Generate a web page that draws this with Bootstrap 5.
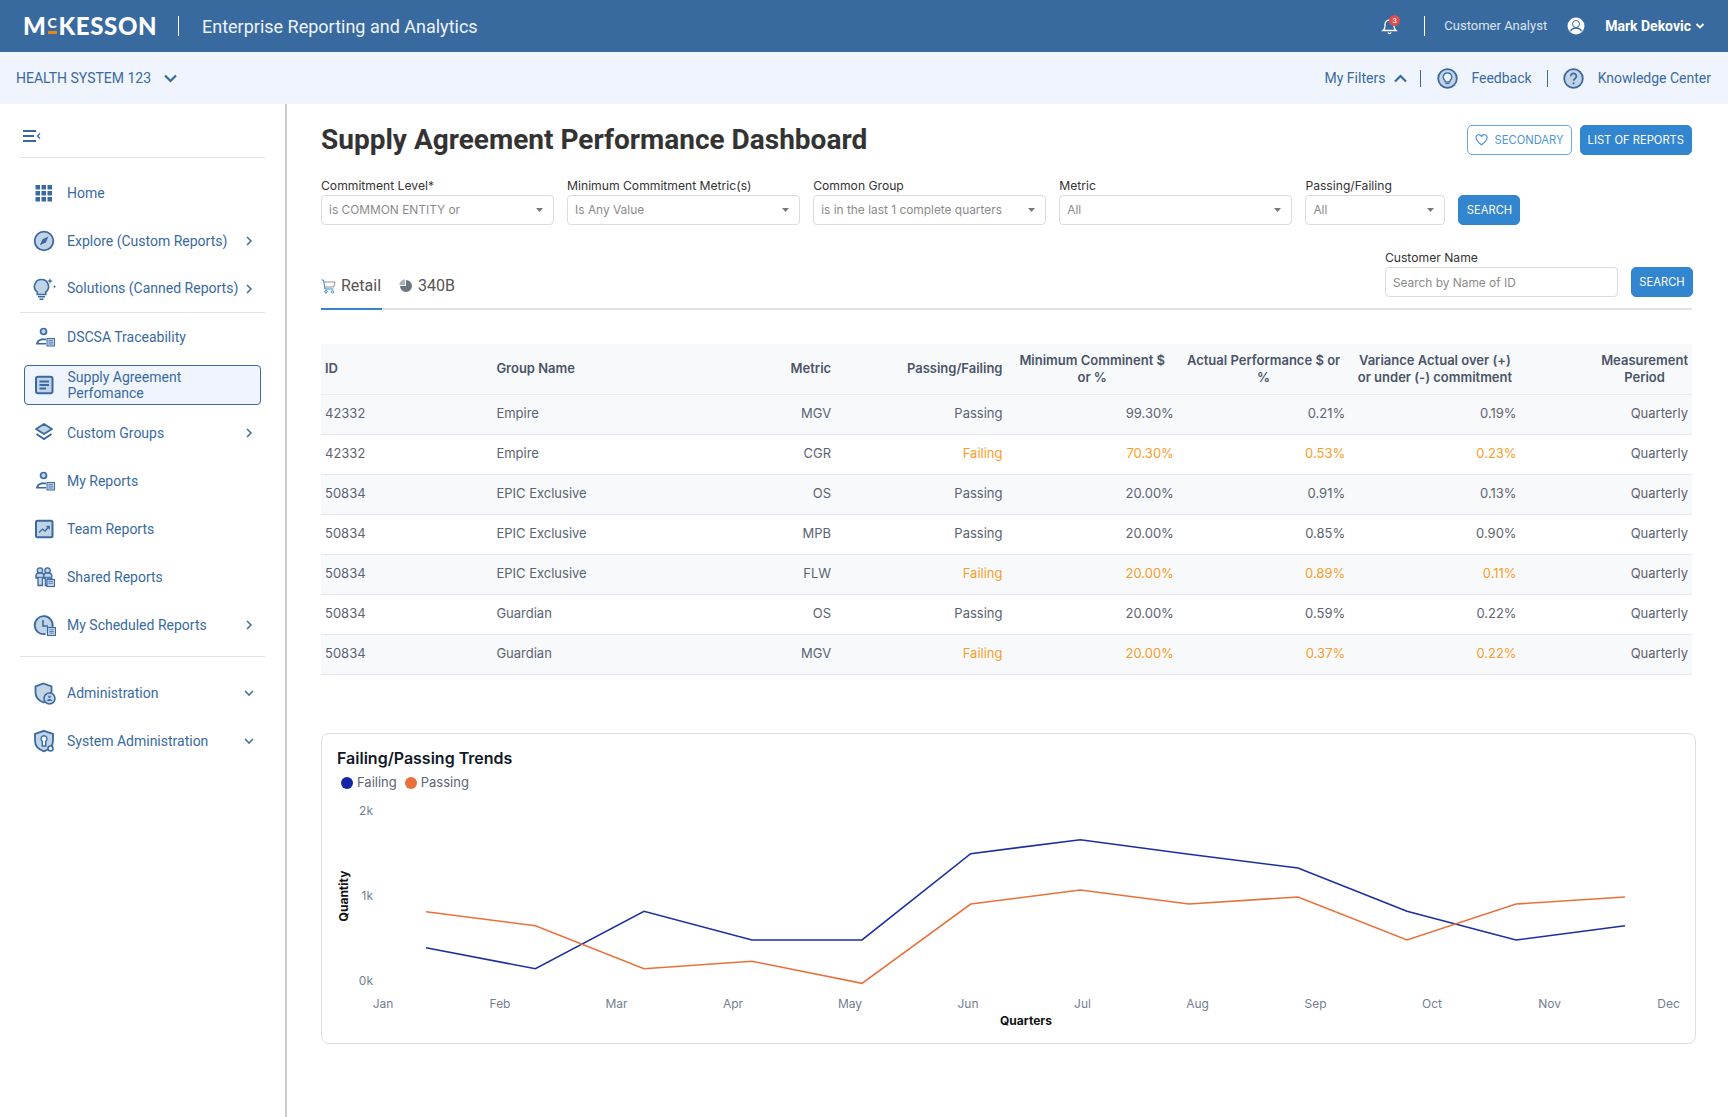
<!DOCTYPE html>
<html lang="en">
<head>
<meta charset="utf-8">
<title>Supply Agreement Performance Dashboard</title>
<link href="https://cdn.jsdelivr.net/npm/bootstrap@5.3.0/dist/css/bootstrap.min.css" rel="stylesheet">
<style>
:root{--mk-blue:#396a9f;--mk-soft:#c3d3e6;--mk-btn:#3285cf;}
body{font-family:"Roboto","Liberation Sans",sans-serif;background:#fff;color:#333;min-height:1117px;overflow:hidden}
.top-bar{height:52px;background:var(--mk-blue);color:#fff;padding:0 23px}
.brand{font-family:"Lato","Liberation Sans",sans-serif;font-weight:900;font-size:24px;line-height:1;letter-spacing:.65px;color:#fff;width:131px;white-space:nowrap}
.brand-c{position:relative;display:inline-block;font-size:14px;vertical-align:7px;margin:0 1px;line-height:1}
.brand-c::after{content:"";position:absolute;left:0;right:0;top:15px;height:3px;background:#e8841a}
.v-rule{width:1px;background:#fff;height:20px}
.app-title{font-size:18px;color:#eef3f9;margin-left:23px}
.role{font-size:13px;color:#d9e4f0}
.user-name{font-size:14px;font-weight:700}
.sub-bar{height:52px;background:#f0f5fd;color:var(--mk-blue);font-size:14px;padding:0 17px 0 16px}
.v-rule-b{width:1px;height:17px;background:var(--mk-blue)}
.shell{display:flex;min-height:1013px}
.side{width:287px;flex:none;border-right:2px solid #ccc;padding:0 20px;color:var(--mk-blue);font-size:14px}
.side-top{height:54px;display:flex;align-items:center;padding-left:3px;padding-top:10px;border-bottom:1px solid #e2e2e2}
.side-list{padding-top:11px}
.side-item{height:48px;display:flex;align-items:center;padding-left:11.5px;color:var(--mk-blue);text-decoration:none}
.side-item .ico{width:24px;height:24px;flex:none;margin-right:11.500px}
.side-item .arr{margin-left:auto;margin-right:13px;flex:none}
.side-item .arr-dn{margin-right:11px}
.side-cur{height:40px;margin:4px;padding-left:7px;background:#f0f5fd;border:1px solid var(--mk-blue);border-radius:4px;line-height:16px}
.side-sep{border-bottom:1px solid #e2e2e2}
.side-gap{height:8px;margin-bottom:12px}
.main{flex:1;min-width:0;padding:21px 36px 0 34px}
.page-title{font-size:28px;font-weight:700;color:#333;margin:0;line-height:30px}
.mk-btn{height:30px;padding:0 7px;font-family:"Inter","Liberation Sans",sans-serif;font-size:11.200px;line-height:28px;border-radius:5px;border:1px solid var(--mk-btn);background:var(--mk-btn);color:#fff;white-space:nowrap}
.mk-btn:hover{background:var(--mk-btn);color:#fff;border-color:var(--mk-btn)}
.mk-btn-line{background:#fff;color:#4f95d8;border:1.5px solid #6aa7de;gap:7px}
.btn-pair{gap:8px}
.filters{display:grid;grid-template-columns:repeat(4,232.6px) 139.6px 62px;column-gap:13.5px;margin-top:21px;align-items:end}
.fld-label{display:block;font-family:"Inter","Liberation Sans",sans-serif;font-size:12.150px;line-height:19px;color:#333;margin:0;white-space:nowrap}
.fld{height:30px;font-family:"Inter","Liberation Sans",sans-serif;font-size:11.900px;color:#8b8b8b;border:1px solid #dcdcdc;border-radius:4px;padding:0 20px 0 7px;line-height:28px}
select.fld{background-image:url("data:image/svg+xml,%3Csvg xmlns='http://www.w3.org/2000/svg' width='7' height='4'%3E%3Cpath d='M0 0h7L3.5 4z' fill='%23777'/%3E%3C/svg%3E");background-size:7px 4px;background-position:right 10px center}
input.fld::placeholder{color:#8b8b8b;opacity:1}
.tab-row{margin-top:23px;border-bottom:2px solid #dfe3e8;height:62px}
.tab-list{gap:17px;margin-bottom:-2px}
.tab-lnk{display:flex;align-items:center;gap:5px;font-size:16px;line-height:24px;color:#555;padding:0 1px 10px 0;border-bottom:2px solid transparent;text-decoration:none}
.tab-on{border-bottom-color:var(--mk-btn)}
.cust{display:grid;grid-template-columns:232.6px 62px;column-gap:13.5px;padding-bottom:11px;margin-right:-1px;align-items:end}
.cust-label{grid-column:1 / 3}
.data-tbl{--bs-table-striped-bg:#f8f9fb;--bs-table-striped-color:#5b6472;--bs-table-border-color:#e3e7ef;--bs-table-color:#5b6472;table-layout:fixed;margin:34px 0 0;font-family:"Inter","Liberation Sans",sans-serif;font-size:13px;color:#5b6472}
.data-tbl th{height:50px;padding:0 4px;background:#f8f9fb;font-weight:600;color:#4a5568;vertical-align:middle;line-height:17px;text-align:right;border-bottom-color:#e8ebf1}
.data-tbl td{height:40px;padding:0 4px;vertical-align:middle;text-align:right;white-space:nowrap}
.data-tbl .al-l{text-align:left}
.data-tbl .al-c{text-align:center}
.data-tbl td.bad{color:#fb9d27!important}
.stack-hd{display:inline-block;text-align:center}
.chart-box{margin-top:58px;margin-right:-4px;height:311px;border:1px solid #dedede;border-radius:8px;--bs-card-bg:#fff}
.chart-title{font-family:"Inter","Liberation Sans",sans-serif;font-size:16px;font-weight:600;line-height:20px;color:#111827;margin:14px 0 0 15px}
.legend-row{margin:5px 0 0 19px;height:20px;font-family:"Inter","Liberation Sans",sans-serif;font-size:13px;color:#5b6472}
.dot{width:12px;height:12px;border-radius:50%;display:inline-block;margin-right:4px}
.dot-f{background:#1226a6}
.dot-p{background:#e9703a;margin-left:8px}
.chart-svg{display:block;margin-top:3px}
.chart-svg text{font-family:"Inter","Liberation Sans",sans-serif;font-size:12px;fill:#737e91}
.chart-svg .ax{font-weight:700;fill:#111}
.bell-wrap{width:18px;height:18px}
.bell-num{left:8px;top:-2px;width:11px;height:11px;background:#dc4d4d;font-size:8px;line-height:1}
.gap-a{margin-left:25px;margin-right:19px}
.gap-b{margin-left:20px}
.gap-c{margin-left:13px}
.gap-d{margin-left:9px}
.gap-e{margin-left:13px;margin-right:16px}
.gap-f{margin-left:13px}
.gap-g{margin-left:15px;margin-right:15px}
.gap-h{margin-left:14px}
</style>
</head>
<body>
<header class="top-bar d-flex align-items-center">
  <div class="brand">M<span class="brand-c">C</span>KESSON</div>
  <span class="v-rule ms-4"></span>
  <span class="app-title">Enterprise Reporting and Analytics</span>
  <div class="ms-auto d-flex align-items-center">
    <span class="bell-wrap position-relative d-inline-flex">
      <svg width="18" height="18" viewBox="0 0 18 18" fill="none" stroke="#fff" stroke-width="1.3"><path d="M2 13.5c1.4-1 2-2.2 2-4.5V7.5a4.5 4.5 0 0 1 9 0V9c0 2.3.6 3.500 2 4.500z"/><path d="M7 15.500a1.800 1.800 0 0 0 3.200 0"/></svg>
      <span class="bell-num position-absolute rounded-circle d-flex align-items-center justify-content-center text-white">3</span>
    </span>
    <span class="v-rule gap-a"></span>
    <span class="role">Customer Analyst</span>
    <svg class="gap-b" width="18" height="18" viewBox="0 0 18 18"><circle cx="9" cy="9" r="8.500" fill="#fff"/><circle cx="9" cy="7" r="3.500" fill="#fff" stroke="#396a9f" stroke-width="1"/><path d="M3.500 14.200c1.200-2.400 3-3.200 5.500-3.200s4.300.8 5.500 3.200" fill="none" stroke="#396a9f" stroke-width="1.300"/></svg>
    <span class="user-name gap-b">Mark Dekovic</span>
    <svg class="ms-1" width="10" height="8" viewBox="0 0 10 8" fill="none" stroke="#fff" stroke-width="1.800"><path d="M1.500 2l3.500 3.500L8.500 2"/></svg>
  </div>
</header>
<div class="sub-bar d-flex align-items-center">
  <span>HEALTH SYSTEM 123</span>
  <svg class="gap-c" width="13" height="9" viewBox="0 0 13 9" fill="none" stroke="#396a9f" stroke-width="2.200"><path d="M1 1.500l5.500 5.500L12 1.500"/></svg>
  <div class="ms-auto d-flex align-items-center">
    <span>My Filters</span>
    <svg class="gap-d" width="13" height="9" viewBox="0 0 13 9" fill="none" stroke="#396a9f" stroke-width="2.200"><path d="M1 7.500L6.500 2 12 7.500"/></svg>
    <span class="v-rule-b gap-e"></span>
    <svg width="21" height="21" viewBox="0 0 21 21"><circle cx="10.500" cy="10.500" r="9.300" fill="#c3d3e6" stroke="#396a9f" stroke-width="1.800"/><path d="M10.500 4.800a4.200 4.200 0 0 0-2.400 7.700v1.300h4.800v-1.300a4.200 4.200 0 0 0-2.400-7.700z" fill="#f0f5fd" stroke="#396a9f" stroke-width="1.200"/><path d="M8.500 15.500h4" stroke="#396a9f" stroke-width="1.200"/></svg>
    <span class="gap-f">Feedback</span>
    <span class="v-rule-b gap-g"></span>
    <svg width="21" height="21" viewBox="0 0 21 21"><circle cx="10.500" cy="10.500" r="9.300" fill="#c3d3e6" stroke="#396a9f" stroke-width="1.800"/><path d="M7.800 8.200a2.800 2.800 0 1 1 4.300 2.300c-1 .7-1.500 1.200-1.500 2.300" fill="none" stroke="#396a9f" stroke-width="1.700"/><circle cx="10.600" cy="15.300" r="1.100" fill="#396a9f"/></svg>
    <span class="gap-h">Knowledge Center</span>
  </div>
</div>
<div class="shell">
  <aside class="side">
    <div class="side-top">
      <svg width="18" height="12" viewBox="0 0 18 12" fill="none" stroke="#396a9f"><path d="M0 1h13M0 6h11M0 11h13" stroke-width="1.800"/><path d="M17 3.500L14.500 6l2.500 2.500" stroke-width="1.400"/></svg>
    </div>
    <nav class="side-list">
      <a class="side-item" href="#"><svg class="ico" viewBox="0 0 24 24" fill="#396a9f"><path d="M3.500 4H8v4.500H3.500zM9.500 4H14v4.500H9.500zM15.500 4H20v4.500h-4.500zM3.500 10H8v4.500H3.500zM9.500 10H14v4.500H9.500zM15.500 10H20v4.500h-4.500zM3.500 16H8v4.500H3.500zM9.500 16H14v4.500H9.500zM15.500 16H20v4.500h-4.500z"/></svg>Home</a>
      <a class="side-item" href="#"><svg class="ico" viewBox="0 0 24 24"><circle cx="12" cy="12" r="9.300" fill="#c3d3e6" stroke="#396a9f" stroke-width="1.800"/><path d="M16.500 7.500l-6 2.700-2.700 6 6-2.700z" fill="#396a9f"/></svg>Explore (Custom Reports)<svg class="arr" width="6" height="10" viewBox="0 0 6 10" fill="none" stroke="#396a9f" stroke-width="1.500"><path d="M1 1l4 4-4 4"/></svg></a>
      <a class="side-item side-sep" href="#"><svg class="ico" viewBox="0 0 24 24"><path d="M9.500 2.500a7 7 0 0 0-4.200 12.600V17.500h8.400v-2.400A7 7 0 0 0 9.500 2.500z" fill="#c3d3e6" stroke="#396a9f" stroke-width="1.600"/><path d="M6 19.800h7M7.500 22.300h4" stroke="#396a9f" stroke-width="1.500"/><path d="M18 1l.8 2.200L21 4l-2.200.8L18 7l-.8-2.200L15 4l2.200-.8zM22.500 8l.5 1.300 1 .5-1 .5-.5 1.200-.5-1.200-1-.5 1-.5z" fill="#396a9f"/></svg>Solutions (Canned Reports)<svg class="arr" width="6" height="10" viewBox="0 0 6 10" fill="none" stroke="#396a9f" stroke-width="1.500"><path d="M1 1l4 4-4 4"/></svg></a>
      <a class="side-item" href="#"><svg class="ico" viewBox="0 0 24 24"><circle cx="11.500" cy="6.500" r="3" fill="#c3d3e6" stroke="#396a9f" stroke-width="1.700"/><path d="M4 19.500c.3-3.500 3-6 6.500-6H14v1.800h-3.500c-2 0-3.500 1-4.200 2.700H14v1.500z" fill="#396a9f"/><rect x="15" y="13.500" width="7.500" height="7.500" fill="#c3d3e6" stroke="#396a9f" stroke-width="1"/><path d="M16.500 15.500h4.500M16.500 17.300h4.500M16.500 19h4.500" stroke="#396a9f" stroke-width=".7"/></svg>DSCSA Traceability</a>
      <a class="side-item side-cur" href="#"><svg class="ico" viewBox="0 0 24 24"><rect x="4" y="3.800" width="16.500" height="16.500" rx="2" fill="#c3d3e6" stroke="#396a9f" stroke-width="2"/><path d="M7.500 8.500h9.500M7.500 12h9.500M7.500 15.500h6.500" stroke="#396a9f" stroke-width="1.800"/></svg><span>Supply Agreement<br>Perfomance</span></a>
      <a class="side-item" href="#"><svg class="ico" viewBox="0 0 24 24"><path d="M12 3l8 5-8 5-8-5z" fill="#c3d3e6" stroke="#396a9f" stroke-width="1.800" stroke-linejoin="round"/><path d="M4.500 13l7.500 5 7.500-5" fill="none" stroke="#396a9f" stroke-width="2"/></svg>Custom Groups<svg class="arr" width="6" height="10" viewBox="0 0 6 10" fill="none" stroke="#396a9f" stroke-width="1.500"><path d="M1 1l4 4-4 4"/></svg></a>
      <a class="side-item" href="#"><svg class="ico" viewBox="0 0 24 24"><circle cx="11.500" cy="6.500" r="3" fill="#c3d3e6" stroke="#396a9f" stroke-width="1.700"/><path d="M4 19.500c.3-3.500 3-6 6.500-6H14v1.800h-3.500c-2 0-3.500 1-4.200 2.700H14v1.500z" fill="#396a9f"/><rect x="15" y="13.500" width="7.500" height="7.500" fill="#c3d3e6" stroke="#396a9f" stroke-width="1"/><path d="M16.500 15.500h4.500M16.500 17.300h4.500M16.500 19h4.500" stroke="#396a9f" stroke-width=".7"/></svg>My Reports</a>
      <a class="side-item" href="#"><svg class="ico" viewBox="0 0 24 24"><rect x="4" y="3.800" width="16.500" height="16.500" rx="1.500" fill="#c3d3e6" stroke="#396a9f" stroke-width="2"/><path d="M7 15.500l3.500-3.500 2.500 2 4-4.500M14.500 9.500h2.700v2.700" fill="none" stroke="#396a9f" stroke-width="1.300"/></svg>Team Reports</a>
      <a class="side-item" href="#"><svg class="ico" viewBox="0 0 24 24" fill="#c3d3e6" stroke="#396a9f" stroke-width="1.300"><circle cx="8" cy="5.500" r="2.700"/><circle cx="15.500" cy="5.500" r="2.700"/><path d="M4 13V11c0-1.800 1.300-3 3-3h2.500c1.300 0 2.300 1.200 2.300 3v2h-1.300v7.500H6v-7.500z"/><path d="M11.800 11c0-1.800 1-3 2.400-3h2.600c1.700 0 3 1.200 3 3v3h-4.300v6.500h-2.200V13h-1.500z"/><path d="M3.500 12.300h16" stroke-width="1"/><rect x="15" y="14.500" width="7.500" height="7" stroke-width="1.100"/><path d="M16.500 16.500h4.500M16.500 18.300h4.500" stroke-width=".7"/></svg>Shared Reports</a>
      <a class="side-item" href="#"><svg class="ico" viewBox="0 0 24 24"><path d="M13.500 21a9 9 0 1 1 7-7" fill="#c3d3e6" stroke="#396a9f" stroke-width="1.800"/><path d="M11 7v6h5" fill="none" stroke="#396a9f" stroke-width="1.600"/><rect x="15.500" y="14.500" width="8" height="8" fill="#c3d3e6" stroke="#396a9f" stroke-width="1.100"/><path d="M17.300 16.800h4.500M17.300 18.500h4.500M17.300 20.200h4.500" stroke="#396a9f" stroke-width=".7"/></svg>My Scheduled Reports<svg class="arr" width="6" height="10" viewBox="0 0 6 10" fill="none" stroke="#396a9f" stroke-width="1.500"><path d="M1 1l4 4-4 4"/></svg></a>
      <div class="side-sep side-gap"></div>
      <a class="side-item" href="#"><svg class="ico" viewBox="0 0 24 24"><path d="M11.500 2.500l8 2.800v6c0 5-3.300 8.500-8 10.200-4.700-1.700-8-5.200-8-10.200v-6z" fill="#c3d3e6" stroke="#396a9f" stroke-width="1.800"/><circle cx="17.500" cy="17.500" r="5.500" fill="#c3d3e6" stroke="#396a9f" stroke-width="1.500"/><circle cx="17.500" cy="15.800" r="1.200" fill="#396a9f"/><path d="M14.800 20c.5-1.300 1.500-2 2.700-2s2.200.7 2.700 2" fill="#396a9f"/></svg>Administration<svg class="arr arr-dn" width="10" height="6" viewBox="0 0 10 6" fill="none" stroke="#396a9f" stroke-width="1.500"><path d="M1 1l4 4 4-4"/></svg></a>
      <a class="side-item" href="#"><svg class="ico" viewBox="0 0 24 24"><path d="M12 1.800l9 3v7c0 5.200-3.700 8.800-9 10.500-5.300-1.700-9-5.300-9-10.500v-7z" fill="#c3d3e6" stroke="#396a9f" stroke-width="1.800"/><path d="M12 6.800a3 3 0 0 0-1.700 5.500V17h3.400v-4.700A3 3 0 0 0 12 6.800z" fill="#f0f5fd" stroke="#396a9f" stroke-width="1.400"/><circle cx="18.500" cy="19.500" r="2.500" fill="#fff" stroke="#396a9f" stroke-width="1.600"/></svg>System Administration<svg class="arr arr-dn" width="10" height="6" viewBox="0 0 10 6" fill="none" stroke="#396a9f" stroke-width="1.500"><path d="M1 1l4 4 4-4"/></svg></a>
    </nav>
  </aside>
  <main class="main">
    <div class="d-flex justify-content-between align-items-center">
      <h1 class="page-title">Supply Agreement Performance Dashboard</h1>
      <div class="btn-pair d-flex">
        <button type="button" class="btn mk-btn mk-btn-line d-inline-flex align-items-center"><svg width="13" height="12" viewBox="0 0 13 12" fill="none" stroke="#4f95d8" stroke-width="1.200"><path d="M6.500 10.800C3 8.200 1 6.300 1 4a2.700 2.700 0 0 1 5.500-1A2.700 2.700 0 0 1 12 4c0 2.300-2 4.200-5.500 6.800z"/></svg>SECONDARY</button>
        <button type="button" class="btn mk-btn">LIST OF REPORTS</button>
      </div>
    </div>
    <form class="filters">
      <div><label class="fld-label">Commitment Level*</label><select class="form-select fld"><option>is COMMON ENTITY or</option></select></div>
      <div><label class="fld-label">Minimum Commitment Metric(s)</label><select class="form-select fld"><option>Is Any Value</option></select></div>
      <div><label class="fld-label">Common Group</label><select class="form-select fld"><option>is in the last 1 complete quarters</option></select></div>
      <div><label class="fld-label">Metric</label><select class="form-select fld"><option>All</option></select></div>
      <div><label class="fld-label">Passing/Failing</label><select class="form-select fld"><option>All</option></select></div>
      <button type="button" class="btn mk-btn">SEARCH</button>
    </form>
    <div class="tab-row d-flex justify-content-between align-items-end">
      <div class="tab-list d-flex">
        <a class="tab-lnk tab-on" href="#"><svg width="15" height="15" viewBox="0 0 15 15" fill="none" stroke="#3285cf" stroke-width="1"><path d="M.5 1h2l1.500 9h8.500"/><path d="M3 3h11l-1.300 5H3.800" stroke="#8a9099"/><circle cx="5" cy="12.800" r="1.200"/><circle cx="11.500" cy="12.800" r="1.200"/></svg>Retail</a>
        <a class="tab-lnk" href="#"><svg width="14" height="14" viewBox="0 0 14 14"><path d="M7 1a6 6 0 1 1-6 6h6z" fill="#6b7680"/><path d="M6 0.300a6 6 0 0 0-5.700 5.700H6z" fill="#aab2ba"/></svg>340B</a>
      </div>
      <div class="cust">
        <label class="fld-label cust-label">Customer Name</label>
        <input class="form-control fld" type="text" placeholder="Search by Name of ID">
        <button type="button" class="btn mk-btn">SEARCH</button>
      </div>
    </div>
    <table class="table table-striped data-tbl">
      <thead>
        <tr><th class="al-l">ID</th><th class="al-l">Group Name</th><th>Metric</th><th>Passing/Failing</th><th class="al-c">Minimum Comminent $<br>or %</th><th class="al-c">Actual Performance $ or<br>%</th><th class="al-c">Variance Actual over (+)<br>or under (-) commitment</th><th><span class="stack-hd">Measurement<br>Period</span></th></tr>
      </thead>
      <tbody>
        <tr><td class="al-l">42332</td><td class="al-l">Empire</td><td>MGV</td><td>Passing</td><td>99.30%</td><td>0.21%</td><td>0.19%</td><td>Quarterly</td></tr>
        <tr><td class="al-l">42332</td><td class="al-l">Empire</td><td>CGR</td><td class="bad">Failing</td><td class="bad">70.30%</td><td class="bad">0.53%</td><td class="bad">0.23%</td><td>Quarterly</td></tr>
        <tr><td class="al-l">50834</td><td class="al-l">EPIC Exclusive</td><td>OS</td><td>Passing</td><td>20.00%</td><td>0.91%</td><td>0.13%</td><td>Quarterly</td></tr>
        <tr><td class="al-l">50834</td><td class="al-l">EPIC Exclusive</td><td>MPB</td><td>Passing</td><td>20.00%</td><td>0.85%</td><td>0.90%</td><td>Quarterly</td></tr>
        <tr><td class="al-l">50834</td><td class="al-l">EPIC Exclusive</td><td>FLW</td><td class="bad">Failing</td><td class="bad">20.00%</td><td class="bad">0.89%</td><td class="bad">0.11%</td><td>Quarterly</td></tr>
        <tr><td class="al-l">50834</td><td class="al-l">Guardian</td><td>OS</td><td>Passing</td><td>20.00%</td><td>0.59%</td><td>0.22%</td><td>Quarterly</td></tr>
        <tr><td class="al-l">50834</td><td class="al-l">Guardian</td><td>MGV</td><td class="bad">Failing</td><td class="bad">20.00%</td><td class="bad">0.37%</td><td class="bad">0.22%</td><td>Quarterly</td></tr>
      </tbody>
    </table>
    <section class="card chart-box">
      <div class="chart-title">Failing/Passing Trends</div>
      <div class="legend-row d-flex align-items-center"><span class="dot dot-f"></span>Failing<span class="dot dot-p"></span>Passing</div>
      <svg class="chart-svg" width="1372" height="246" viewBox="322 795 1372 246">
        <g text-anchor="end"><text x="373" y="814">2k</text><text x="373" y="899">1k</text><text x="373" y="984">0k</text></g>
        <g text-anchor="middle"><text x="383" y="1007">Jan</text><text x="500" y="1007">Feb</text><text x="616.500" y="1007">Mar</text><text x="733" y="1007">Apr</text><text x="850" y="1007">May</text><text x="968" y="1007">Jun</text><text x="1082.500" y="1007">Jul</text><text x="1197.500" y="1007">Aug</text><text x="1315.500" y="1007">Sep</text><text x="1432" y="1007">Oct</text><text x="1549.500" y="1007">Nov</text><text x="1668.500" y="1007">Dec</text></g>
        <text class="ax" x="1026" y="1024" text-anchor="middle">Quarters</text>
        <text class="ax" transform="translate(348 895) rotate(-90)" text-anchor="middle">Quantity</text>
        <polyline fill="none" stroke="#1a2fa0" stroke-width="1.600" points="426,946.700 535.400,967.700 644,910.300 752,939 862,939 970.700,852.700 1080.300,838.700 1189,853.300 1298,867 1407,910.300 1516,939 1625,924.700"/>
        <polyline fill="none" stroke="#e9703a" stroke-width="1.600" points="426,910.700 535.400,924.700 644,967.700 752,960.300 862,982.300 970.700,903 1080.300,889 1189,903 1298,896 1407,939 1516,903 1625,896"/>
      </svg>
    </section>
  </main>
</div>
<script src="https://cdn.jsdelivr.net/npm/bootstrap@5.3.0/dist/js/bootstrap.bundle.min.js"></script>
</body>
</html>
